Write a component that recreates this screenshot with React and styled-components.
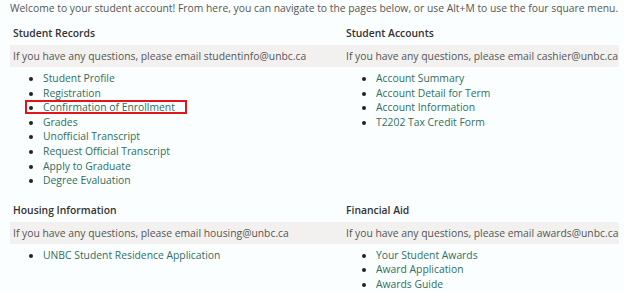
import React from 'react';
import styled, { createGlobalStyle } from 'styled-components';

const GlobalStyle = createGlobalStyle`
  html, body {
    margin: 0;
    padding: 0;
    background: #fbfefe;
  }
  body {
    font-family: 'Open Sans', 'Noto Sans', sans-serif;
    font-size: 10.35px;
    color: #444;
  }
`;

const sections = [
  {
    title: 'Student Records',
    email: 'studentinfo@unbc.ca',
    links: [
      'Student Profile',
      'Registration',
      'Confirmation of Enrollment',
      'Grades',
      'Unofficial Transcript',
      'Request Official Transcript',
      'Apply to Graduate',
      'Degree Evaluation',
    ],
    marked: 'Confirmation of Enrollment',
  },
  {
    title: 'Student Accounts',
    email: 'cashier@unbc.ca',
    links: [
      'Account Summary',
      'Account Detail for Term',
      'Account Information',
      'T2202 Tax Credit Form',
    ],
  },
  {
    title: 'Housing Information',
    email: 'housing@unbc.ca',
    links: ['UNBC Student Residence Application'],
  },
  {
    title: 'Financial Aid',
    email: 'awards@unbc.ca',
    links: ['Your Student Awards', 'Award Application', 'Awards Guide'],
  },
];

export default function App() {
  return (
    <Page>
      <GlobalStyle />
      <Welcome>
        Welcome to your student account! From here, you can navigate to the
        pages below, or use Alt+M to use the four square menu.
      </Welcome>
      <Grid>
        {sections.map((s) => (
          <Section key={s.title}>
            <Heading>{s.title}</Heading>
            <InfoBar>If you have any questions, please email {s.email}</InfoBar>
            <LinkList>
              {s.links.map((l) => (
                <Item key={l} $marked={l === s.marked}>
                  <Link href="#">{l}</Link>
                </Item>
              ))}
            </LinkList>
          </Section>
        ))}
      </Grid>
    </Page>
  );
}

const Page = styled.div`
  padding: 1px 0 0 10px;
  width: 609px;
`;

const Welcome = styled.div`
  color: #555;
  line-height: 15px;
  white-space: nowrap;
`;

const Grid = styled.div`
  display: grid;
  grid-template-columns: 333px 276px;
  row-gap: 11px;
  margin-top: 6px;
`;

const Section = styled.div`
  display: flex;
  flex-direction: column;
`;

const Heading = styled.div`
  height: 23px;
  line-height: 22px;
  padding-left: 3px;
  font-weight: 600;
  color: #333;
`;

const InfoBar = styled.div`
  height: 22px;
  line-height: 22px;
  padding-left: 3px;
  background: #f2f1f0;
  color: #555;
  white-space: nowrap;
`;

const LinkList = styled.ul`
  margin: 4px 0 0;
  padding: 0 0 0 33px;
  list-style: disc;
  color: #222;
`;

const Item = styled.li`
  line-height: 14.6px;
  position: relative;

  &::after {
    content: '';
    display: ${({ $marked }) => ($marked ? 'block' : 'none')};
    position: absolute;
    left: -18px;
    top: 0;
    width: 158px;
    height: 10px;
    border: 2px solid #e3141b;
  }
`;

const Link = styled.a`
  color: #2e6e62;
  text-decoration: none;
`;
